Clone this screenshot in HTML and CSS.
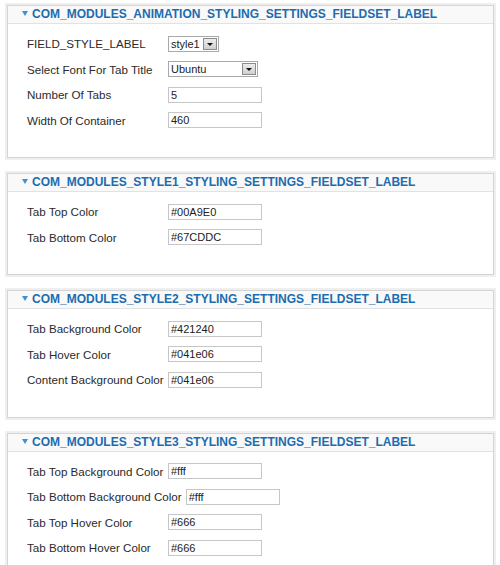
FILE: index.html
```html
<!DOCTYPE html>
<html lang="en">
<head>
<meta charset="UTF-8">
<meta name="viewport" content="width=device-width, initial-scale=1.0">
<title>Module Settings</title>
<link rel="stylesheet" href="styles.css">
</head>
<body>

<div class="panel">
  <div class="panel-head"><span class="caret"></span>COM_MODULES_ANIMATION_STYLING_SETTINGS_FIELDSET_LABEL</div>
  <div class="panel-body">
    <div class="field">
      <label>FIELD_STYLE_LABEL</label>
      <span class="select short"><span class="select-val">style1</span><span class="select-btn"></span></span>
    </div>
    <div class="field">
      <label>Select Font For Tab Title</label>
      <span class="select long"><span class="select-val">Ubuntu</span><span class="select-btn"></span></span>
    </div>
    <div class="field">
      <label>Number Of Tabs</label>
      <input class="text" type="text" value="5">
    </div>
    <div class="field">
      <label>Width Of Container</label>
      <input class="text" type="text" value="460">
    </div>
  </div>
</div>

<div class="panel">
  <div class="panel-head"><span class="caret"></span>COM_MODULES_STYLE1_STYLING_SETTINGS_FIELDSET_LABEL</div>
  <div class="panel-body">
    <div class="field">
      <label>Tab Top Color</label>
      <input class="text" type="text" value="#00A9E0">
    </div>
    <div class="field">
      <label>Tab Bottom Color</label>
      <input class="text" type="text" value="#67CDDC">
    </div>
  </div>
</div>

<div class="panel">
  <div class="panel-head"><span class="caret"></span>COM_MODULES_STYLE2_STYLING_SETTINGS_FIELDSET_LABEL</div>
  <div class="panel-body">
    <div class="field">
      <label>Tab Background Color</label>
      <input class="text" type="text" value="#421240">
    </div>
    <div class="field">
      <label>Tab Hover Color</label>
      <input class="text" type="text" value="#041e06">
    </div>
    <div class="field">
      <label>Content Background Color</label>
      <input class="text" type="text" value="#041e06">
    </div>
  </div>
</div>

<div class="panel">
  <div class="panel-head"><span class="caret"></span>COM_MODULES_STYLE3_STYLING_SETTINGS_FIELDSET_LABEL</div>
  <div class="panel-body">
    <div class="field">
      <label>Tab Top Background Color</label>
      <input class="text" type="text" value="#fff">
    </div>
    <div class="field">
      <label>Tab Bottom Background Color</label>
      <input class="text" type="text" value="#fff">
    </div>
    <div class="field">
      <label>Tab Top Hover Color</label>
      <input class="text" type="text" value="#666">
    </div>
    <div class="field">
      <label>Tab Bottom Hover Color</label>
      <input class="text" type="text" value="#666">
    </div>
  </div>
</div>

</body>
</html>
```

FILE: styles.css
```css
body { margin: 0; padding: 5px 0 0; background: #fff; font-family: "Liberation Sans", Arial, sans-serif; font-size: 11.6px; color: #2a2a2a; }

.panel { margin: 0 6px 15px 7px; border: 1px solid #d4d4d4; box-shadow: 0 0 0 2px #efefef; background: #fff; }
.panel-head { height: 17px; line-height: 17px; border-bottom: 1px solid #e2e2e2; background: #f9f9f9; padding-left: 14px; font-size: 12px; font-weight: bold; color: #1c6cb0; white-space: nowrap; overflow: hidden; }
.caret { display: inline-block; width: 0; height: 0; border-left: 3.5px solid transparent; border-right: 3.5px solid transparent; border-top: 5px solid #3a92d2; margin-right: 4px; vertical-align: 2px; }
.panel-body { padding: 7px 0 24px 19px; }

.field { display: flex; align-items: center; height: 25.5px; }
.field label { min-width: 137px; margin-right: 4px; white-space: nowrap; }

.text { box-sizing: border-box; width: 94px; height: 16px; margin: 0; padding: 0 2px; border: 1px solid #c6c6c6; font-family: "Liberation Sans", Arial, sans-serif; font-size: 11px; color: #222; background: #fff; }

.select { box-sizing: border-box; display: flex; align-items: center; justify-content: space-between; height: 16px; border: 1px solid #a9a9a9; background: #fff; color: #222; }
.select.short { width: 51px; }
.select.long { width: 90px; }
.select-val { padding-left: 2px; font-size: 11px; }
.select-btn { position: relative; box-sizing: border-box; width: 14px; height: 12px; margin-right: 1px; border: 1px solid #8c8c8c; background: linear-gradient(#ececec, #cfcfcf); }
.select-btn::after { content: ""; position: absolute; left: 3px; top: 4px; border-left: 3px solid transparent; border-right: 3px solid transparent; border-top: 3px solid #111; }
```
